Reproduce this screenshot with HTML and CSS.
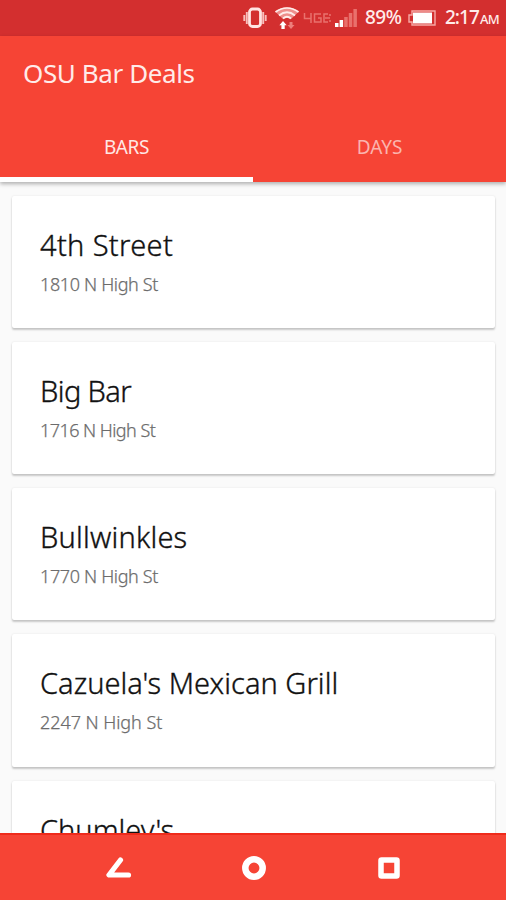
FILE: index.html
```html
<!DOCTYPE html>
<html lang="en">
	<head>
		<meta charset="utf-8">
		<meta name="viewport" content="width=device-width, initial-scale=1">
		<title>OSU Bar Deals</title>
		<link rel="stylesheet" href="styles.css">
	</head>
	<body>
		<div id="status-bar">
			<svg class="vibrate" width="24" height="24" viewBox="0 0 24 24">
				<rect x="6.500" y="3" width="11" height="17.500" rx="3" fill="none" stroke="#ffe4e2" stroke-width="2.800"/>
				<path d="M3.800 6v12M20.200 6v12M1.300 9v6M22.700 9v6" stroke="#f8bfbc" stroke-width="1.900"/>
			</svg>
			<svg class="wifi" width="26" height="26" viewBox="0 0 26 26">
				<path d="M1 6.500Q13-2 25 6.500L17 14Q13 11 9 14Z" fill="#ee8f8c"/>
				<path d="M1.500 7Q13-1 24.500 7M5 10.500Q13 4 21 10.500M9 13.500Q13 10 17 13.500" fill="none" stroke="#ffecea" stroke-width="1.700"/>
				<path d="M9 16l3.700 4.200h-2V24H7.400v-3.800h-2z" fill="#fff"/>
				<path d="M17 24l3.500-4h-2v-3h-3v3h-2z" fill="#ed7f7b"/>
			</svg>
			<svg class="network" width="28" height="14" viewBox="0 0 28 14">
				<path d="M1.500 2v5.500h7M8 2v10M18 3h-6.500v8H18V7h-3M25 3h-4v8h4M27 3v2M27 9v2M22 7h5" fill="none" stroke="#e9716d" stroke-width="1.500"/>
			</svg>
			<svg class="signal" width="24" height="20" viewBox="0 0 24 20">
				<path d="M1 15h3.500v4H1zM5.600 12h3.500v7H5.600z" fill="#fff"/>
				<path d="M10.200 9h3.500v10h-3.500zM14.800 5h3.500v14h-3.500zM19.400 1h3.500v18h-3.500z" fill="#e9706c"/>
			</svg>
			<span id="percent">89%</span>
			<svg class="battery" width="28" height="16" viewBox="0 0 28 16">
				<path d="M4 1h23v14H4v-3H1V5h3z" fill="none" stroke="#f7aaa7" stroke-width="1.400"/>
				<path d="M5 2.500h19v11H5z" fill="#fff"/>
			</svg>
			<span id="clock">2:17</span><span id="meridiem">AM</span>
		</div>
		<header id="app-bar">
			<h1>OSU Bar Deals</h1>
			<nav id="tabs">
				<a class="tab active"><span>BARS</span></a>
				<a class="tab"><span>DAYS</span></a>
			</nav>
		</header>
		<main id="bar-list">
			<section class="card">
				<h2 class="street">4th Street</h2>
				<p>1810 N High St</p>
			</section>
			<section class="card">
				<h2 class="big">Big Bar</h2>
				<p class="narrow">1716 N High St</p>
			</section>
			<section class="card">
				<h2 class="bull">Bullwinkles</h2>
				<p>1770 N High St</p>
			</section>
			<section class="card">
				<h2 class="cazuela">Cazuela's Mexican Grill</h2>
				<p class="wide">2247 N High St</p>
			</section>
			<section class="card">
				<h2 class="chumley">Chumley's</h2>
			</section>
		</main>
		<footer id="nav-bar">
			<svg class="back" width="26" height="24" viewBox="0 0 26 24">
				<path d="M14.500 4L3 19H22.500" fill="none" stroke="#fff" stroke-width="5.200" stroke-linecap="round" stroke-linejoin="round"/>
			</svg>
			<svg class="home" width="26" height="26" viewBox="0 0 26 26">
				<circle cx="13" cy="13" r="8.700" fill="none" stroke="#fff" stroke-width="6.500"/>
			</svg>
			<svg class="recent" width="22" height="22" viewBox="0 0 22 22">
				<rect x="3" y="3" width="16" height="16" rx=".5" fill="none" stroke="#fff" stroke-width="5.500" stroke-linejoin="round"/>
			</svg>
		</footer>
	</body>
</html>
```

FILE: styles.css
```css
* {
	box-sizing:border-box;
	margin:0;
	padding:0}
body {
	background-color:#fafafa;
	display:flex;
	flex-direction:column;
	font-family:"Noto Sans","Open Sans",sans-serif;
	height:900px;
	overflow:hidden;
	width:506px}
svg {
	display:block;
	flex:none}
#status-bar {
	align-items:center;
	background-color:#d32f2f;
	color:#ffecea;
	display:flex;
	flex:none;
	font-size:19px;
	font-weight:500;
	height:35.500px;
	line-height:35px;
	padding-left:243px;
	white-space:nowrap}
.wifi {
	margin-left:7px}
.network {
	margin-left:3px}
.signal {
	margin-left:3px}
#percent {
	letter-spacing:-0.5px;
	margin-left:7px;
	width:38px}
.battery {
	margin-left:5px}
#clock {
	letter-spacing:-1px;
	margin-left:9px;
	width:35px}
#meridiem {
	font-size:13px;
	letter-spacing:-0.7px;
	padding-top:4px}
#app-bar {
	background-color:#f64435;
	box-shadow:0 2px 4px rgba(0,0,0,0.3);
	color:#ffebe9;
	display:flex;
	flex:none;
	flex-direction:column;
	height:146px;
	justify-content:space-between;
	position:relative}
#app-bar h1 {
	font-size:26px;
	font-weight:400;
	letter-spacing:-0.4px;
	line-height:36px;
	padding:19px 0 0 23px}
#tabs {
	display:flex;
	height:70px}
.tab {
	border-bottom:5px solid transparent;
	color:#fbb4ae;
	flex:1;
	font-size:19px;
	line-height:70px;
	text-align:center}
.tab.active {
	border-color:#fff;
	color:#ffe7e4;
	letter-spacing:-0.4px}
#bar-list {
	display:flex;
	flex:1;
	flex-direction:column;
	gap:14px;
	min-height:0;
	overflow:hidden;
	padding:14px 11px 0 12px}
.card {
	background-color:#fff;
	border-radius:2px;
	box-shadow:0 2px 2px rgba(0,0,0,0.2),0 0 2px rgba(0,0,0,0.1);
	flex:none;
	height:132.300px;
	padding:29px 28px}
.card h2 {
	-webkit-text-stroke:0.35px #111;
	color:#111;
	font-size:29px;
	font-weight:300;
	line-height:40px;
	white-space:nowrap}
.card .street {
	letter-spacing:0.35px}
.card .big {
	letter-spacing:-0.6px}
.card .bull {
	letter-spacing:0.2px}
.card .cazuela {
	letter-spacing:0.04px}
.card p {
	-webkit-text-stroke:0.25px #6c6c6c;
	color:#6c6c6c;
	font-size:18px;
	font-weight:300;
	letter-spacing:-0.35px;
	line-height:24px;
	margin-top:7px}
.card .narrow {
	letter-spacing:-0.55px}
.card .wide {
	letter-spacing:-0.05px}
#nav-bar {
	align-items:center;
	background-color:#f64435;
	border-top:2px solid #ef2b1b;
	display:flex;
	flex:none;
	height:67px;
	padding-left:106px;
	position:relative}
.home {
	margin-left:109px}
.recent {
	margin-left:111px}
```
